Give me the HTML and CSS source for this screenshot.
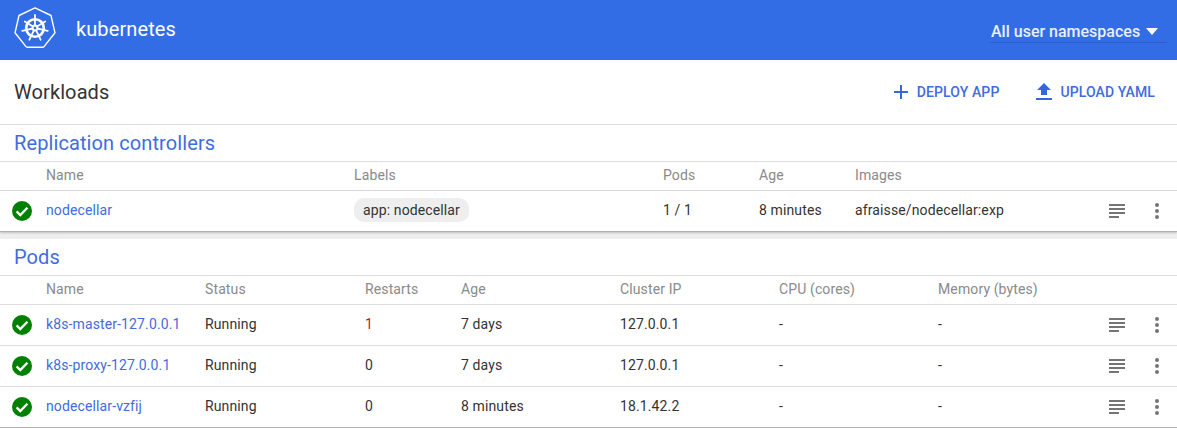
FILE: index.html
```html
<!DOCTYPE html>
<html lang="en">
<head>
<meta charset="utf-8">
<title>Kubernetes Workloads</title>
<link rel="stylesheet" href="styles.css">
</head>
<body>
<svg class="defs" width="0" height="0" aria-hidden="true">
  <symbol id="ok" viewBox="0 0 20 20">
    <circle cx="10" cy="10" r="10" fill="#008000"/>
    <path d="M4.6 10.4l3.7 3.7 7.1-7.4" fill="none" stroke="#fff" stroke-width="2.3"/>
  </symbol>
  <symbol id="logs" viewBox="0 0 16 14">
    <path d="M0 0h16v2H0zM0 4h16v2H0zM0 8h16v2H0zM0 12h10v2H0z" fill="#757575"/>
  </symbol>
  <symbol id="more" viewBox="0 0 4 16">
    <circle cx="2" cy="2" r="2" fill="#757575"/><circle cx="2" cy="8" r="2" fill="#757575"/><circle cx="2" cy="14" r="2" fill="#757575"/>
  </symbol>
</svg>
<header class="topbar">
  <div class="brand">
    <svg class="logo" viewBox="0 0 42 42" width="42" height="42">
      <path d="M21 .8 37 8.5 41 25.8 30 39.6a1.5 1.5 0 0 1-1 .6H13a1.500 1.500 0 0 1-1-.6L1 25.800 5 8.500Z" fill="none" stroke="#fff" stroke-width="1.400" stroke-linejoin="round"/>
      <g fill="none" stroke="#fff">
        <circle cx="21" cy="21" r="8.800" stroke-width="2.600"/>
        <circle cx="21" cy="21" r="2.500" stroke-width="1.900"/>
        <path stroke-width="1.800" stroke-linecap="round" d="M21 8v10.500M31.200 14.500l-8.200 5M33.700 23.900l-10.500-2.400M26.600 32.700l-4.600-9.500M15.400 32.700l4.600-9.500M8.300 23.900l10.500-2.400M10.800 14.500l8.200 5"/>
      </g>
    </svg>
    <span class="brand-name">kubernetes</span>
  </div>
  <div class="ns-select">
    <span>All user namespaces</span>
    <i class="caret"></i>
  </div>
</header>

<div class="actionbar">
  <h1>Workloads</h1>
  <div class="actions">
    <a class="action">
      <svg width="16" height="16" viewBox="0 0 16 16"><path d="M7 1h2v6h6v2H9v6H7V9H1V7h6z" fill="#3367e0"/></svg>
      DEPLOY APP
    </a>
    <a class="action">
      <svg width="16" height="18" viewBox="0 0 16 18"><path d="M5 12V7H1l7-7 7 7h-4v5zM0 15h16v2H0z" fill="#3367e0"/></svg>
      UPLOAD YAML
    </a>
  </div>
</div>

<section class="card">
  <h2>Replication controllers</h2>
  <div class="row head rc"><span></span><span>Name</span><span>Labels</span><span>Pods</span><span>Age</span><span>Images</span></div>
  <div class="row body rc last">
    <svg class="status"><use href="#ok"/></svg>
    <a>nodecellar</a>
    <span><b class="chip">app: nodecellar</b></span>
    <span>1 / 1</span><span>8 minutes</span><span>afraisse/nodecellar:exp</span>
    <svg class="logs"><use href="#logs"/></svg><svg class="more"><use href="#more"/></svg>
  </div>
</section>

<section class="card">
  <h2>Pods</h2>
  <div class="row head pods"><span></span><span>Name</span><span>Status</span><span>Restarts</span><span>Age</span><span>Cluster IP</span><span>CPU (cores)</span><span>Memory (bytes)</span></div>
  <div class="row body pods">
    <svg class="status"><use href="#ok"/></svg><a>k8s-master-127.0.0.1</a><span>Running</span><span class="warn">1</span><span>7 days</span><span>127.0.0.1</span><span>-</span><span>-</span>
    <svg class="logs"><use href="#logs"/></svg><svg class="more"><use href="#more"/></svg>
  </div>
  <div class="row body pods">
    <svg class="status"><use href="#ok"/></svg><a>k8s-proxy-127.0.0.1</a><span>Running</span><span>0</span><span>7 days</span><span>127.0.0.1</span><span>-</span><span>-</span>
    <svg class="logs"><use href="#logs"/></svg><svg class="more"><use href="#more"/></svg>
  </div>
  <div class="row body pods last">
    <svg class="status"><use href="#ok"/></svg><a>nodecellar-vzfij</a><span>Running</span><span>0</span><span>8 minutes</span><span>18.1.42.2</span><span>-</span><span>-</span>
    <svg class="logs"><use href="#logs"/></svg><svg class="more"><use href="#more"/></svg>
  </div>
</section>
</body>
</html>
```
FILE: styles.css
```css
* { box-sizing: border-box; }
html, body { margin: 0; height: 428px; overflow: hidden; }
body { background: #eee; font-family: Roboto, sans-serif; font-size: 14px; color: #333; }
.defs { position: absolute; }

.topbar { height: 60px; background: #326de6; color: #fff; display: flex; justify-content: space-between; padding: 0 10px 0 14px; }
.brand { display: flex; align-items: center; gap: 20px; height: 56px; }
.logo { display: block; }
.brand-name { font-size: 20px; letter-spacing: .1px; padding-top: 2px; }
.ns-select { width: 178px; height: 43px; padding: 21px 9px 0 2px; display: flex; justify-content: space-between; align-items: center; border-bottom: 1px solid #2d5fc9; font-size: 16px; font-weight: 500; line-height: 20px; color: #e9effc; }
.caret { width: 0; height: 0; border: 6px solid transparent; border-top: 7px solid #fff; border-bottom: 0; }

.actionbar { height: 65px; background: #fff; border-bottom: 1px solid #ddd; display: flex; justify-content: space-between; align-items: center; padding: 0 22px 1px 14px; }
h1 { margin: 0; font-size: 20px; font-weight: 400; color: #333; letter-spacing: .1px; }
.actions { display: flex; gap: 37px; }
.action { display: flex; align-items: center; gap: 8px; color: #3f6ce0; font-size: 14px; font-weight: 500; letter-spacing: .1px; }

.card { background: #fff; }
.card + .card { margin-top: 7px; }
h2 { margin: 0; height: 37px; padding: 6px 14px 0; font-size: 20px; font-weight: 400; color: #3f6ce0; letter-spacing: .1px; border-bottom: 1px solid #ddd; }

.row { display: grid; align-items: center; letter-spacing: .12px; }
.rc { grid-template-columns: 46px 308px 309px 96px 96px 254px 46px 20px; }
.pods { grid-template-columns: 46px 159px 160px 96px 159px 159px 159px 171px 46px 20px; }
.head { height: 29px; color: #8a8a8a; border-bottom: 1px solid #ddd; padding-bottom: 2px; }
.body { height: 41px; border-bottom: 1px solid #ddd; padding-bottom: 3px; }
.last { border-bottom-color: #b0b0b0; }
.rc.last { box-shadow: 0 1px 2px rgba(0,0,0,.2); }
.body a { color: #3f6ce0; }
.warn { color: #b71c1c; }
.status { width: 20px; height: 20px; margin: 2px 0 0 12px; }
.logs { width: 16px; height: 14px; margin-top: 2px; }
.more { width: 4px; height: 16px; margin-top: 2px; }
.chip { display: inline-block; font-weight: 400; background: #eee; border-radius: 10px; padding: 1px 9px; line-height: 22px; }
```
